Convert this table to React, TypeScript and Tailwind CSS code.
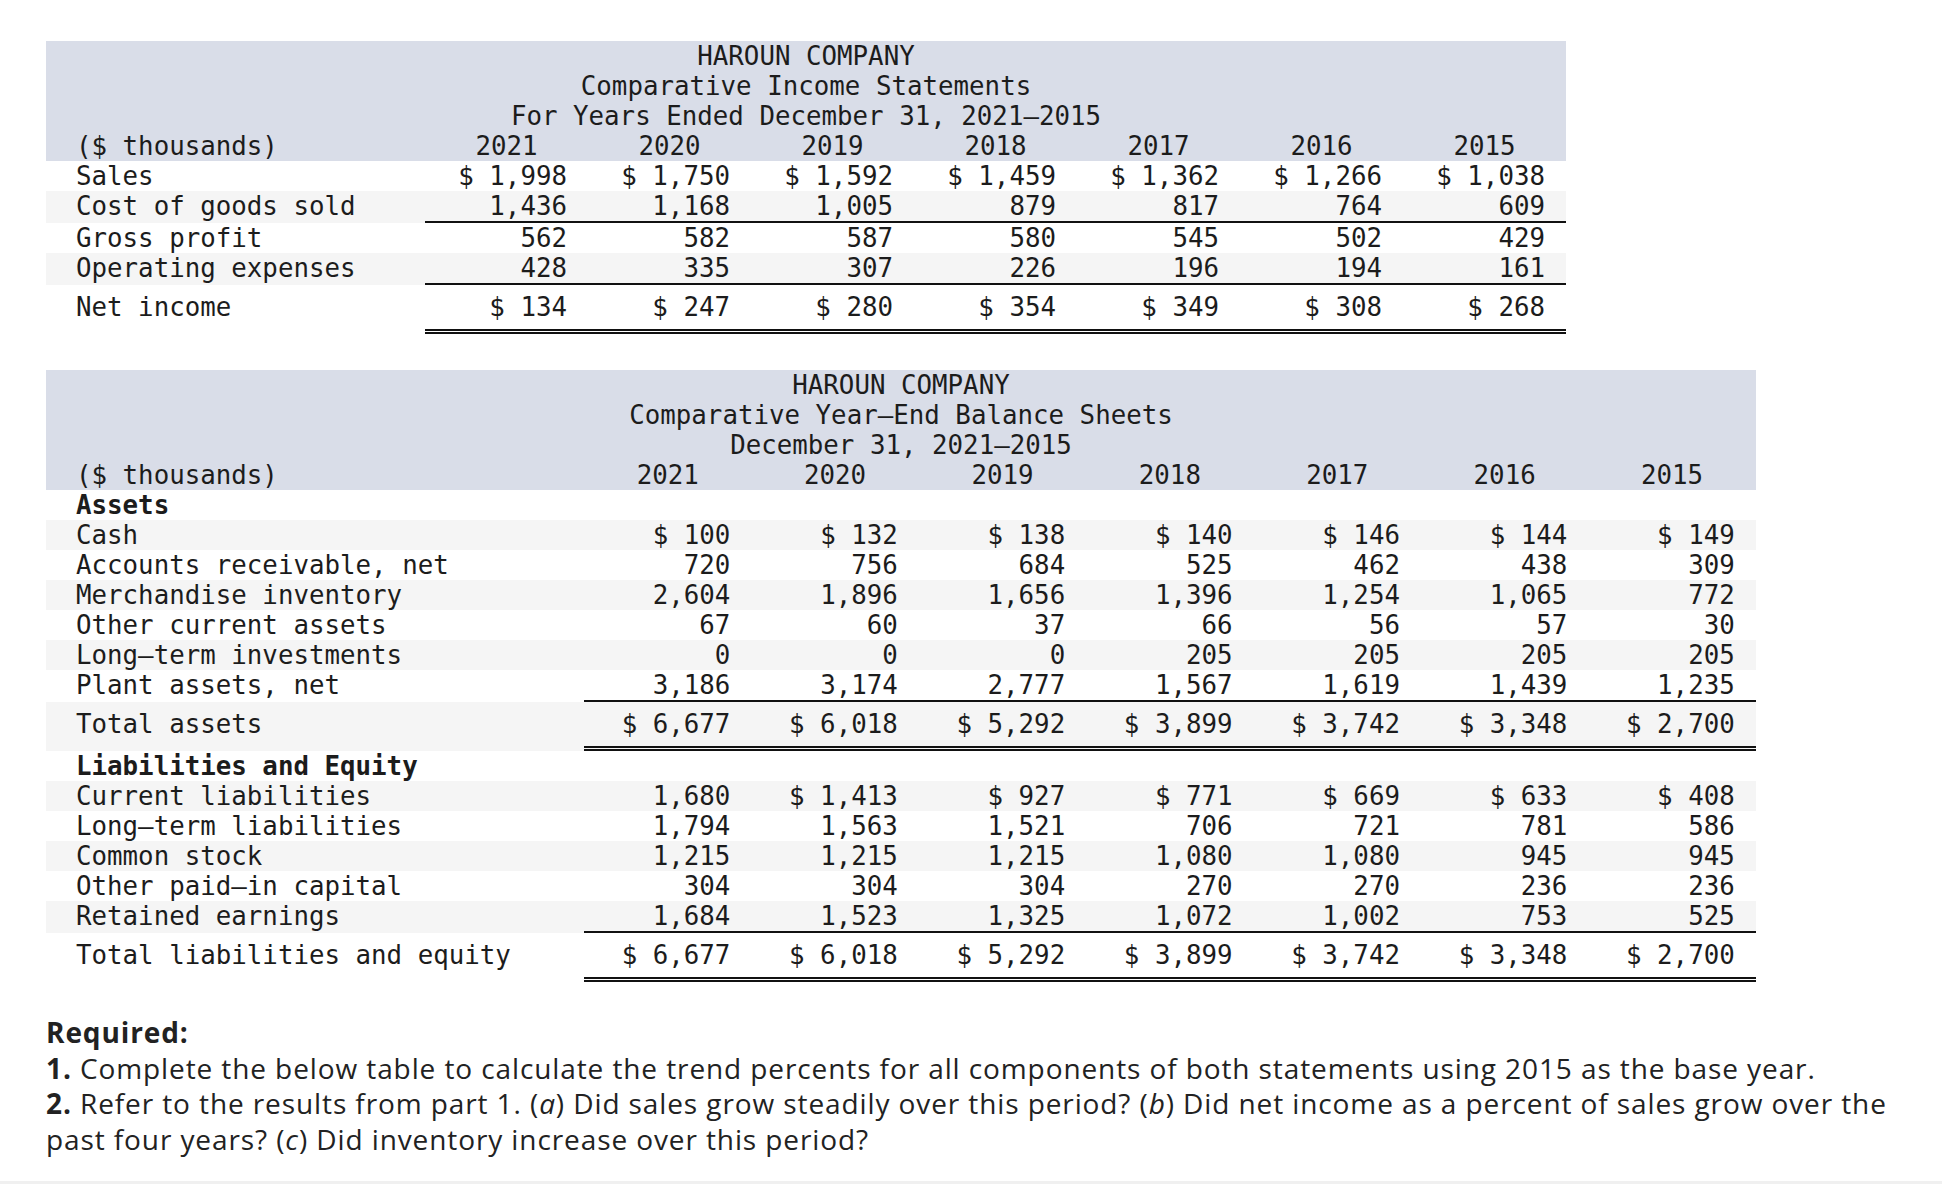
type Line = "single" | "double";

interface Fila {
  label: string;
  values?: string[];
  bold?: boolean;
  gray?: boolean;
  line?: Line;
}

const years = ["2021", "2020", "2019", "2018", "2017", "2016", "2015"];

const incomeRows: Fila[] = [
  { label: "Sales", values: ["$ 1,998", "$ 1,750", "$ 1,592", "$ 1,459", "$ 1,362", "$ 1,266", "$ 1,038"] },
  { label: "Cost of goods sold", gray: true, line: "single", values: ["1,436", "1,168", "1,005", "879", "817", "764", "609"] },
  { label: "Gross profit", values: ["562", "582", "587", "580", "545", "502", "429"] },
  { label: "Operating expenses", gray: true, line: "single", values: ["428", "335", "307", "226", "196", "194", "161"] },
  { label: "Net income", line: "double", values: ["$ 134", "$ 247", "$ 280", "$ 354", "$ 349", "$ 308", "$ 268"] },
];

const balanceRows: Fila[] = [
  { label: "Assets", bold: true },
  { label: "Cash", gray: true, values: ["$ 100", "$ 132", "$ 138", "$ 140", "$ 146", "$ 144", "$ 149"] },
  { label: "Accounts receivable, net", values: ["720", "756", "684", "525", "462", "438", "309"] },
  { label: "Merchandise inventory", gray: true, values: ["2,604", "1,896", "1,656", "1,396", "1,254", "1,065", "772"] },
  { label: "Other current assets", values: ["67", "60", "37", "66", "56", "57", "30"] },
  { label: "Long–term investments", gray: true, values: ["0", "0", "0", "205", "205", "205", "205"] },
  { label: "Plant assets, net", line: "single", values: ["3,186", "3,174", "2,777", "1,567", "1,619", "1,439", "1,235"] },
  { label: "Total assets", gray: true, line: "double", values: ["$ 6,677", "$ 6,018", "$ 5,292", "$ 3,899", "$ 3,742", "$ 3,348", "$ 2,700"] },
  { label: "Liabilities and Equity", bold: true },
  { label: "Current liabilities", gray: true, values: ["1,680", "$ 1,413", "$ 927", "$ 771", "$ 669", "$ 633", "$ 408"] },
  { label: "Long–term liabilities", values: ["1,794", "1,563", "1,521", "706", "721", "781", "586"] },
  { label: "Common stock", gray: true, values: ["1,215", "1,215", "1,215", "1,080", "1,080", "945", "945"] },
  { label: "Other paid–in capital", values: ["304", "304", "304", "270", "270", "236", "236"] },
  { label: "Retained earnings", gray: true, line: "single", values: ["1,684", "1,523", "1,325", "1,072", "1,002", "753", "525"] },
  { label: "Total liabilities and equity", line: "double", values: ["$ 6,677", "$ 6,018", "$ 5,292", "$ 3,899", "$ 3,742", "$ 3,348", "$ 2,700"] },
];

interface TablaProps {
  titulo: string[];
  filas: Fila[];
  ancho: string;
  labelW: string;
  colW: string;
}

const Tabla = ({ titulo, filas, ancho, labelW, colW }: TablaProps) => {
  return (
    <div className={`${ancho} font-['DejaVu_Sans_Mono',monospace] text-[25.8px] leading-[30px] text-[#1c1c1c]`}>
      {/* Encabezado */}
      <div className="bg-[#d9dde8]">
        {titulo.map((t) => (
          <div key={t} className="h-[30px] text-center whitespace-pre">
            {t}
          </div>
        ))}
        <div className="flex h-[30px]">
          <div className={`${labelW} pl-[30px]`}>($ thousands)</div>
          {years.map((y) => (
            <div key={y} className={`${colW} text-center`}>
              {y}
            </div>
          ))}
        </div>
      </div>

      {/* Filas */}
      {filas.map((fila) => {
        const alto = fila.line === "double" ? "h-[44px]" : "h-[30px]";
        const borde =
          fila.line === "single"
            ? "border-b-2 border-[#111]"
            : fila.line === "double"
            ? "border-b-[5px] border-double border-[#111]"
            : "";
        return (
          <div key={fila.label} className={`flex ${fila.gray ? "bg-[#f5f5f5]" : ""}`}>
            <div className={`${labelW} ${alto} pl-[30px] flex items-center whitespace-pre ${fila.bold ? "font-bold" : ""}`}>
              {fila.label}
            </div>
            <div className={`flex ${borde}`}>
              {years.map((y, i) => (
                <div key={y} className={`${colW} ${alto} pr-[21px] flex items-center justify-end whitespace-pre`}>
                  {fila.values ? fila.values[i] : ""}
                </div>
              ))}
            </div>
          </div>
        );
      })}
    </div>
  );
};

export default function App() {
  return (
    <div className="bg-white min-h-[1191px] pt-[41px] flex flex-col">
      <div className="pl-[46px]">
        <Tabla
          titulo={["HAROUN COMPANY", "Comparative Income Statements", "For Years Ended December 31, 2021–2015"]}
          filas={incomeRows}
          ancho="w-[1520px]"
          labelW="w-[379px]"
          colW="w-[163px]"
        />
      </div>

      <div className="pl-[46px] mt-[36px]">
        <Tabla
          titulo={["HAROUN COMPANY", "Comparative Year–End Balance Sheets", "December 31, 2021–2015"]}
          filas={balanceRows}
          ancho="w-[1710px]"
          labelW="w-[538px]"
          colW="w-[167.4px]"
        />
      </div>

      {/* Enunciado */}
      <div className="pl-[46px] pr-[40px] mt-[33px] font-['Open_Sans',sans-serif] text-[28px] tracking-[0.9px] leading-[35.5px] text-[#222]">
        <p className="font-bold">Required:</p>
        <p>
          <span className="font-bold">1.</span> Complete the below table to calculate the trend percents for all components of both statements using 2015 as the base year.
        </p>
        <p>
          <span className="font-bold">2.</span> Refer to the results from part 1. (<i>a</i>) Did sales grow steadily over this period? (<i>b</i>) Did net income as a percent of sales grow over the past four years? (<i>c</i>) Did inventory increase over this period?
        </p>
      </div>

      <div className="mt-auto mb-[7px] h-[3px] bg-[#f0f0f0]" />
    </div>
  );
}
